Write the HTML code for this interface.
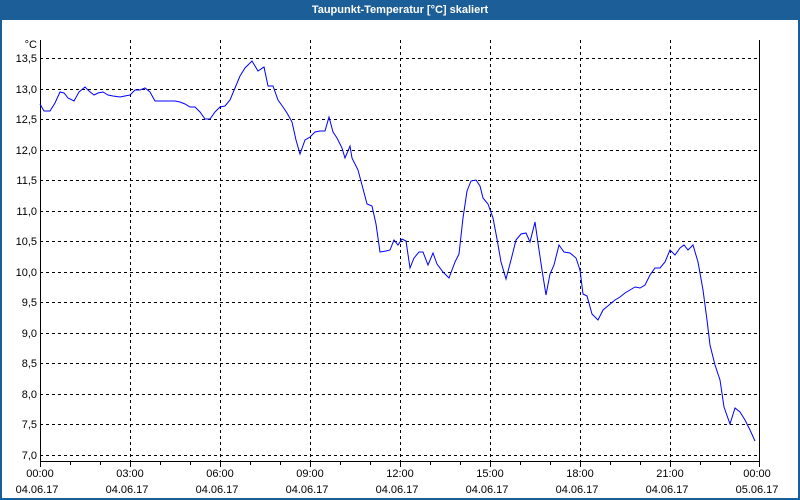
<!DOCTYPE html>
<html><head><style>
body{margin:0;width:800px;height:500px;overflow:hidden;background:#fff;font-family:"Liberation Sans",sans-serif}
</style></head><body>
<svg width="800" height="500" xmlns="http://www.w3.org/2000/svg" style="display:block">
<rect x="0" y="0" width="800" height="500" fill="#1c5e98"/>
<rect x="2" y="20" width="796" height="478" fill="#fff"/>
<text x="400" y="13" font-size="11" font-weight="bold" fill="#fff" text-anchor="middle" font-family="Liberation Sans,sans-serif">Taupunkt-Temperatur [°C] skaliert</text>
<g stroke="#000" stroke-width="1" stroke-dasharray="3,3" shape-rendering="crispEdges">
<line x1="40" x2="760" y1="58.5" y2="58.5"/><line x1="40" x2="760" y1="89.5" y2="89.5"/><line x1="40" x2="760" y1="119.5" y2="119.5"/><line x1="40" x2="760" y1="150.5" y2="150.5"/><line x1="40" x2="760" y1="180.5" y2="180.5"/><line x1="40" x2="760" y1="211.5" y2="211.5"/><line x1="40" x2="760" y1="241.5" y2="241.5"/><line x1="40" x2="760" y1="272.5" y2="272.5"/><line x1="40" x2="760" y1="302.5" y2="302.5"/><line x1="40" x2="760" y1="333.5" y2="333.5"/><line x1="40" x2="760" y1="363.5" y2="363.5"/><line x1="40" x2="760" y1="394.5" y2="394.5"/><line x1="40" x2="760" y1="424.5" y2="424.5"/><line x1="40" x2="760" y1="455.5" y2="455.5"/>
<line y1="40" y2="461" x1="130.5" x2="130.5"/><line y1="40" y2="461" x1="220.5" x2="220.5"/><line y1="40" y2="461" x1="310.5" x2="310.5"/><line y1="40" y2="461" x1="400.5" x2="400.5"/><line y1="40" y2="461" x1="490.5" x2="490.5"/><line y1="40" y2="461" x1="580.5" x2="580.5"/><line y1="40" y2="461" x1="670.5" x2="670.5"/>
</g>
<g stroke="#000" stroke-width="1" shape-rendering="crispEdges">
<line x1="40.5" y1="40" x2="40.5" y2="467"/><line x1="40" y1="461.5" x2="760" y2="461.5"/><line x1="759.5" y1="40" x2="759.5" y2="462"/>
<path d="M70.5 461v4M100.5 461v4M130.5 461v6M160.5 461v4M190.5 461v4M220.5 461v6M250.5 461v4M280.5 461v4M310.5 461v6M340.5 461v4M370.5 461v4M400.5 461v6M430.5 461v4M460.5 461v4M490.5 461v6M520.5 461v4M550.5 461v4M580.5 461v6M610.5 461v4M640.5 461v4M670.5 461v6M700.5 461v4M730.5 461v4M759.5 461v6"/>
</g>
<polyline fill="none" stroke="#0000ff" stroke-width="1" points="40,104 44,111 50,111 55,103 60,92 64,93 68,98 74,101 79,92 85,87 89,91 94,95 98,93 103,92 108,95 113,96 120,97 125,96 130,95 135,90 140,90 145,88 150,92 155,101 160,101 175,101 180,102 185,104 190,107 195,107 200,112 205,119 210,119 215,112 220,107 225,106 230,100 235,88 240,76 245,68 252,61 258,71 264,67 268,86 273,86 278,100 283,107 287,113 292,122 296,140 300,154 305,140 310,137 315,132 320,131 325,131 329,117 333,132 337,138 342,148 345,158 350,146 352,158 358,170 362,185 367,204 372,206 376,224 380,252 386,251 390,250 394,240 398,245 402,239 406,241 410,268 414,258 419,252 423,252 428,265 433,253 437,264 443,272 449,278 455,262 459,254 463,218 467,191 471,181 476,180 480,186 483,198 488,204 493,218 497,239 501,262 506,279 511,260 516,240 521,234 526,233 530,242 535,222 538,243 542,270 546,295 550,274 554,265 559,245 564,252 570,253 576,258 580,270 583,294 587,296 592,314 598,320 603,310 609,305 615,300 620,297 625,293 630,290 635,287 640,288 645,285 650,275 655,268 660,268 665,262 670,250 675,255 680,248 684,245 688,250 693,245 698,262 703,290 707,320 710,345 715,365 720,380 724,407 730,424 735,408 740,412 745,420 750,430 755,441"/>
<g font-size="11" fill="#000" text-anchor="end" font-family="Liberation Sans,sans-serif">
<text x="37" y="48">°C</text>
<text x="37" y="62">13,5</text><text x="37" y="93">13,0</text><text x="37" y="123">12,5</text><text x="37" y="154">12,0</text><text x="37" y="184">11,5</text><text x="37" y="215">11,0</text><text x="37" y="245">10,5</text><text x="37" y="276">10,0</text><text x="37" y="306">9,5</text><text x="37" y="337">9,0</text><text x="37" y="367">8,5</text><text x="37" y="398">8,0</text><text x="37" y="428">7,5</text><text x="37" y="459">7,0</text>
</g>
<g font-size="11" fill="#000" text-anchor="middle" font-family="Liberation Sans,sans-serif">
<text x="40" y="477">00:00</text><text x="130" y="477">03:00</text><text x="220" y="477">06:00</text><text x="310" y="477">09:00</text><text x="400" y="477">12:00</text><text x="490" y="477">15:00</text><text x="580" y="477">18:00</text><text x="670" y="477">21:00</text><text x="757" y="477">00:00</text>
<text x="37" y="493">04.06.17</text><text x="127" y="493">04.06.17</text><text x="217" y="493">04.06.17</text><text x="307" y="493">04.06.17</text><text x="397" y="493">04.06.17</text><text x="487" y="493">04.06.17</text><text x="577" y="493">04.06.17</text><text x="667" y="493">04.06.17</text><text x="757" y="493">05.06.17</text>
</g>
</svg>
</body></html>
